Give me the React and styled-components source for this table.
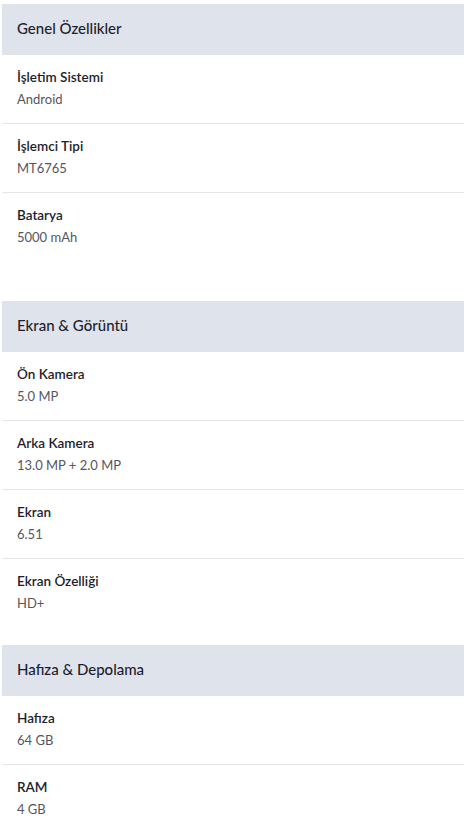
import React from "react";
import styled, { createGlobalStyle } from "styled-components";

const Global = createGlobalStyle`
  html, body { margin: 0; padding: 0; background: #ffffff; }
  body { font-family: "Lato", "Noto Sans", sans-serif; }
`;

const Page = styled.div`
  padding: 4px 5px 0 2px;
  display: flex;
  flex-direction: column;
`;

const Section = styled.section`
  display: flex;
  flex-direction: column;
  margin-bottom: ${(p) => p.$gap}px;
`;

const Header = styled.h2`
  margin: 0;
  box-sizing: border-box;
  height: 51px;
  display: flex;
  align-items: center;
  padding: 0 0 3px 15px;
  background: #dfe3ec;
  color: #1d1e2c;
  font-size: 15px;
  font-weight: 500;
`;

const Row = styled.div`
  display: flex;
  flex-direction: column;
  gap: 4px;
  padding: 13px 15px 15px;
  border-bottom: ${(p) => (p.$last ? "none" : "1px solid #e6e6e6")};
`;

const Label = styled.div`
  font-size: 13.5px;
  line-height: 18px;
  font-weight: 600;
  color: #1d1e2c;
`;

const Value = styled.div`
  font-size: 13px;
  line-height: 18px;
  font-weight: 400;
  color: #555660;
`;

const data = [
  {
    title: "Genel Özellikler",
    gap: 40,
    rows: [
      ["İşletim Sistemi", "Android"],
      ["İşlemci Tipi", "MT6765"],
      ["Batarya", "5000 mAh"],
    ],
  },
  {
    title: "Ekran & Görüntü",
    gap: 18,
    rows: [
      ["Ön Kamera", "5.0 MP"],
      ["Arka Kamera", "13.0 MP + 2.0 MP"],
      ["Ekran", "6.51"],
      ["Ekran Özelliği", "HD+"],
    ],
  },
  {
    title: "Hafıza & Depolama",
    gap: 0,
    rows: [
      ["Hafıza", "64 GB"],
      ["RAM", "4 GB"],
    ],
  },
];

export default function App() {
  return (
    <>
      <Global />
      <Page>
        {data.map((s) => (
          <Section key={s.title} $gap={s.gap}>
            <Header>{s.title}</Header>
            {s.rows.map(([l, v], i) => (
              <Row key={l} $last={i === s.rows.length - 1}>
                <Label>{l}</Label>
                <Value>{v}</Value>
              </Row>
            ))}
          </Section>
        ))}
      </Page>
    </>
  );
}
